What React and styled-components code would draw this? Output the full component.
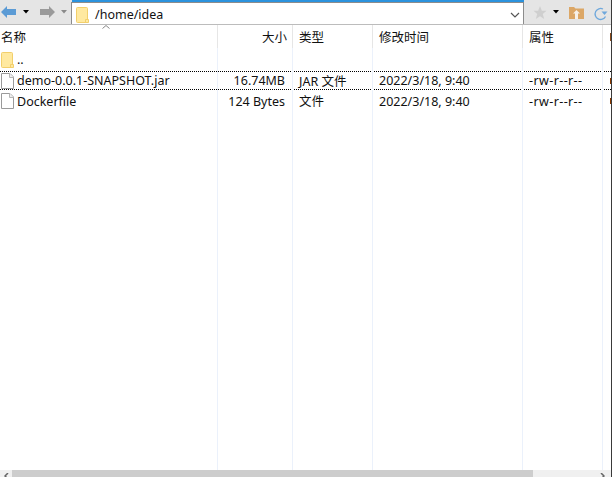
import React from 'react';
import styled, { createGlobalStyle } from 'styled-components';

const GlobalStyle = createGlobalStyle`
  html, body { margin: 0; padding: 0; background: #fff; overflow: hidden; }
  body { font-family: "Noto Sans", "Noto Sans CJK SC", sans-serif; }
`;

const COLUMNS = '218px 75px 80px 150px 80px 8px';

const Window = styled.div`
  width: 612px;
  height: 477px;
  box-sizing: border-box;
  display: flex;
  flex-direction: column;
  overflow: hidden;
  background: #fff;
  font-size: 12px;
  color: #111;
  border-right: 1px solid #3a3a3a;
`;

const Toolbar = styled.div`
  height: 24px;
  flex: none;
  display: flex;
  background: #e5e5e5;
  border-bottom: 1px solid #bcbcbc;
`;

const NavGroup = styled.div`
  width: 71px;
  flex: none;
  display: flex;
  align-items: center;
  padding: 0 0 0 1px;
  box-sizing: border-box;
`;

const AddressBar = styled.div`
  width: 453px;
  flex: none;
  box-sizing: border-box;
  display: flex;
  align-items: center;
  background: #fff;
  border: 1px solid #8c8c8c;
  border-bottom: none;
  margin-top: 2px;
  padding: 3px 3px 0 4px;
  gap: 6px;
`;

const Path = styled.span`
  flex: 1;
  font-family: "Noto Sans", sans-serif;
  font-size: 12.5px;
  line-height: 16px;
`;

const AccentLine = styled.div`
  position: absolute;
  top: 0;
  left: 72px;
  width: 452px;
  height: 2px;
  background: #2b93de;
`;

const RightGroup = styled.div`
  flex: 1;
  display: flex;
  align-items: center;
  padding-left: 9px;
  box-sizing: border-box;
`;

const SortMark = styled.svg`
  position: absolute;
  left: 102px;
  top: 0;
`;

const ListArea = styled.div`
  position: relative;
  flex: 1;
  display: flex;
  flex-direction: column;
  min-height: 0;
`;

const Row = styled.div`
  display: grid;
  grid-template-columns: ${COLUMNS};
  height: ${p => p.$h}px;
  flex: none;
  align-items: center;
  font-family: "Noto Sans", "Noto Sans CJK SC", sans-serif;
  font-size: 12.5px;
  ${p => p.$focus && `
    background-image: repeating-linear-gradient(90deg, #000 0 1px, transparent 1px 2px), repeating-linear-gradient(90deg, #000 0 1px, transparent 1px 2px);
    background-size: 100% 1px, 100% 1px;
    background-position: 0 0, 0 18px;
    background-repeat: no-repeat;
  `}
`;

const Cell = styled.div`
  height: 100%;
  display: flex;
  align-items: center;
  gap: 3px;
  white-space: nowrap;
  overflow: hidden;
  box-sizing: border-box;
  padding-left: ${p => p.$first ? '1px' : '6px'};
  padding-right: ${p => p.$right ? (p.$head ? '5px' : '7px') : '0'};
  padding-bottom: ${p => p.$lift ? '1px' : '0'};
  justify-content: ${p => p.$right ? 'flex-end' : 'flex-start'};
  letter-spacing: ${p => p.$spaced ? '0.4px' : 'normal'};
  border-right: ${p => p.$last ? 'none' : '1px solid ' + (p.$head ? '#e6e6e6' : '#ebf1fb')};
`;

const Clipped = styled.span`
  width: 2px;
  height: ${p => p.$h}px;
  margin-left: 1px;
  background: ${p => p.$c};
  flex: none;
`;

const Rest = styled.div`
  flex: 1;
  min-height: 0;
  display: grid;
  grid-template-columns: ${COLUMNS};
`;

const RestCol = styled.div`
  border-right: ${p => p.$last ? 'none' : '1px solid #ebf1fb'};
`;

const Scrollbar = styled.div`
  height: 7px;
  flex: none;
  display: flex;
  background: #f0f0f0;
`;

const ScrollEnd = styled.div`
  width: ${p => p.$right ? '11px' : '12px'};
  flex: none;
  height: 7px;
  display: flex;
  align-items: flex-end;
  justify-content: ${p => p.$right ? 'flex-start' : 'center'};
`;

const Thumb = styled.div`
  width: 521px;
  height: 7px;
  flex: none;
  background: #cdcdcd;
`;

const Gap = styled.div`
  flex: 1;
`;

const Folder = () => (
  <svg width="13" height="16" viewBox="0 0 13 16" style={{ flex: 'none' }}>
    <path d="M.5 1.5a1 1 0 0 1 1-1h9a1 1 0 0 1 1 1V15.500H1.500a1 1 0 0 1-1-1z" fill="#ffe9a0" stroke="#f2cf6b" />
    <path d="M9.500 15.500v-3h3v3z" fill="#ffe9a0" stroke="#f2cf6b" />
  </svg>
);

const FileIcon = () => (
  <svg width="13" height="16" viewBox="0 0 13 16" style={{ flex: 'none' }}>
    <path d="M.5.500H9L12.500 4V15.500H.500z" fill="#fff" stroke="#9a9a9a" />
    <path d="M8.500.500V4.500H12.500" fill="#eee" stroke="#b5b5b5" />
  </svg>
);

const Arrow = ({ color, flip }) => (
  <svg width="15" height="12" viewBox="0 0 15 12" style={flip ? { transform: 'scaleX(-1)' } : undefined}>
    <path d="M0 6L6 0V3H15V9H6V12z" fill={color} />
  </svg>
);

const Caret = ({ color, ml, mr }) => (
  <svg width="6" height="4" viewBox="0 0 6 4" style={{ marginLeft: ml, marginRight: mr }}>
    <path d="M0 0H6L3 3.500z" fill={color} />
  </svg>
);

const files = [
  { name: 'demo-0.0.1-SNAPSHOT.jar', size: '16.74MB', type: 'JAR 文件', focus: true },
  { name: 'Dockerfile', size: '124 Bytes', type: '文件' },
];

export default function App() {
  return (
    <Window>
      <GlobalStyle />
      <AccentLine />
      <Toolbar>
        <NavGroup>
          <Arrow color="#5b9bd5" />
          <Caret color="#000" ml="7px" mr="11px" />
          <Arrow color="#9a9a9a" flip />
          <Caret color="#8a8a8a" ml="6px" />
        </NavGroup>
        <AddressBar>
          <Folder />
          <Path>/home/idea</Path>
          <svg width="10" height="6" viewBox="0 0 10 6"><path d="M1 1L5 5L9 1" fill="none" stroke="#555" strokeWidth="1.200" /></svg>
        </AddressBar>
        <RightGroup>
          <svg width="14" height="13" viewBox="0 0 14 14"><path d="M7 0L9 5H14L10 8.500L11.500 14L7 11L2.500 14L4 8.500L0 5H5z" fill="#cfcfcf" /></svg>
          <Caret color="#000" ml="6px" mr="10px" />
          <svg width="15" height="13" viewBox="0 0 15 13">
            <path d="M0 1H5L6.500 2.500H15V13H0z" fill="#dca766" />
            <path d="M7.500 4L11 7.500H9V13H6V7.500H4z" fill="#f7f1e8" />
          </svg>
          <svg width="15" height="14" viewBox="0 0 14 14" style={{ marginLeft: 9, marginTop: 3 }}>
            <path d="M12 9.500A5.500 5.500 0 1 1 9.500 2" fill="none" stroke="#6fa8dc" strokeWidth="1.300" />
            <path d="M8 4.500H14L11 8z" fill="#6fa8dc" />
          </svg>
        </RightGroup>
      </Toolbar>
      <ListArea>
        <SortMark width="8" height="4" viewBox="0 0 8 4">
          <path d="M0.500 3.500L4 0.500L7.500 3.500" fill="none" stroke="#888" />
        </SortMark>
        <Row $h={23}>
          <Cell $first $head $lift>名称</Cell>
          <Cell $right $head $lift>大小</Cell>
          <Cell $head $lift>类型</Cell>
          <Cell $head $lift>修改时间</Cell>
          <Cell $head $lift>属性</Cell>
          <Cell $last $head><Clipped $h={8} $c="#8a4a1a" /></Cell>
        </Row>
        <Row $h={23}>
          <Cell $first><Folder />..</Cell>
          <Cell /><Cell /><Cell /><Cell /><Cell $last />
        </Row>
        {files.map(f => (
          <Row key={f.name} $h={f.focus ? 19 : 22} $focus={f.focus}>
            <Cell $first><FileIcon />{f.name}</Cell>
            <Cell $right>{f.size}</Cell>
            <Cell $lift>{f.type}</Cell>
            <Cell>2022/3/18, 9:40</Cell>
            <Cell $spaced>-rw-r--r--</Cell>
            <Cell $last><Clipped $h={6} $c="#8a3a00" /></Cell>
          </Row>
        ))}
        <Rest>
          <RestCol /><RestCol /><RestCol /><RestCol /><RestCol /><RestCol $last />
        </Rest>
        <Scrollbar>
          <ScrollEnd>
            <svg width="5" height="4" viewBox="0 0 5 4"><path d="M4 0L1 3L4 6" fill="none" stroke="#666" strokeWidth="1.500" /></svg>
          </ScrollEnd>
          <Thumb />
          <Gap />
          <ScrollEnd $right>
            <svg width="5" height="4" viewBox="0 0 5 4"><path d="M1 0L4 3L1 6" fill="none" stroke="#666" strokeWidth="1.500" /></svg>
          </ScrollEnd>
        </Scrollbar>
      </ListArea>
    </Window>
  );
}
